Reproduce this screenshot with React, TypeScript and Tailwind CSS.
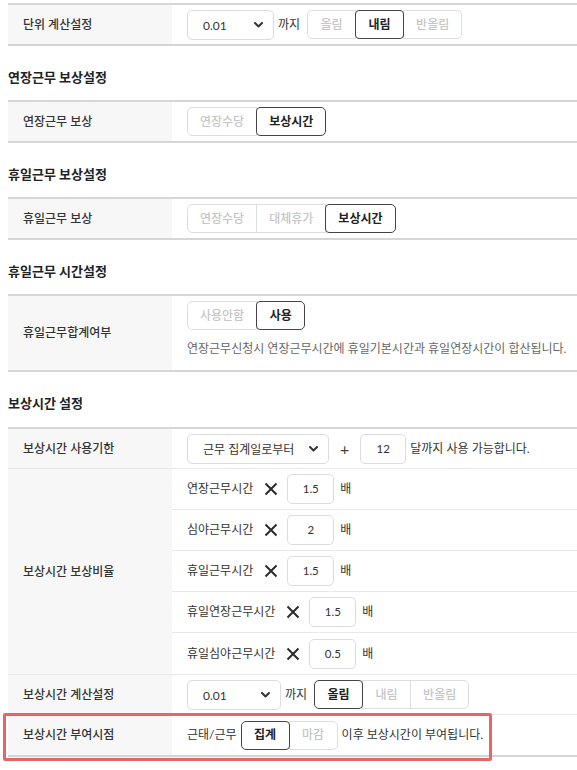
import React from 'react';
import clsx from 'clsx';

const FONT = "font-['Lato','Noto_Sans_CJK_KR',sans-serif]";

const Chevron = () => (
  <svg width="9" height="6" viewBox="0 0 9 6" fill="none">
    <path d="M1 1l3.5 3.5L8 1" stroke="#333" strokeWidth="2" strokeLinecap="round" strokeLinejoin="round" />
  </svg>
);

const Times = () => (
  <svg width="14" height="14" viewBox="0 0 14 14" fill="none">
    <path d="M1.5 1.5l11 11M12.5 1.5l-11 11" stroke="#2b2b2b" strokeWidth="2" />
  </svg>
);

interface SelectProps {
  value: string;
  width: string;
}

const SelectBox: React.FC<SelectProps> = ({ value, width }) => (
  <div
    className={clsx(
      'flex h-[30px] items-center justify-between rounded-[5px] border border-[#dcdcdc] bg-white pl-[15px] pr-[10px] text-[12px] text-[#333]',
      width
    )}
  >
    <span className="pt-[3px]">{value}</span>
    <Chevron />
  </div>
);

const NumBox: React.FC<{ value: string; width?: string }> = ({ value, width = 'w-[47px]' }) => (
  <div
    className={clsx(
      'flex h-[30px] items-center justify-center rounded-[5px] border border-[#dcdcdc] bg-white text-[11.5px] text-[#333]',
      width
    )}
  >
    {value}
  </div>
);

interface SegProps {
  items: string[];
  active: number;
}

const Seg: React.FC<SegProps> = ({ items, active }) => (
  <div className="flex h-[29px]">
    {items.map((t, i) => (
      <div
        key={t}
        className={clsx(
          'flex min-w-[49px] items-center justify-center border px-3 text-[12px]',
          i > 0 && '-ml-px',
          i === 0 && 'rounded-l-[5px]',
          i === items.length - 1 && 'rounded-r-[5px]',
          i === active
            ? 'relative z-10 rounded-[4px] border-[#444] font-bold text-[#222]'
            : 'border-[#dedede] font-medium text-[#c6c6c6]'
        )}
      >
        {t}
      </div>
    ))}
  </div>
);

const Label: React.FC<{ children: React.ReactNode }> = ({ children }) => (
  <div className="flex w-[164px] shrink-0 items-center bg-[#f7f7f7] pl-[15px] text-[12px] font-medium text-[#333]">
    {children}
  </div>
);

const Heading: React.FC<{ children: React.ReactNode; top?: string; bottom?: string }> = ({
  children,
  top = 'pt-[23px]',
  bottom = 'pb-[15px]',
}) => (
  <div className={clsx('text-[13px] font-bold leading-[16px] text-[#222]', top, bottom)}>{children}</div>
);

const RatioRow: React.FC<{ name: string; value: string; last?: boolean }> = ({ name, value, last }) => (
  <div className={clsx('flex h-[41px] items-center pl-[15px] text-[12px] text-[#333]', !last && 'border-b border-[#e8e8e8]')}>
    <span>{name}</span>
    <span className="ml-[11px] mr-[9px]">
      <Times />
    </span>
    <NumBox value={value} />
    <span className="ml-[6px]">배</span>
  </div>
);

export default function App() {
  return (
    <div className={clsx('min-h-screen bg-white pl-2 pt-[3px]', FONT)}>
      {/* 단위 계산설정 */}
      <div className="border-y-2 border-[#d6d6d6]">
        <div className="flex h-[39px]">
          <Label>단위 계산설정</Label>
          <div className="flex items-center pl-[15px] text-[12px] text-[#333]">
            <SelectBox value="0.01" width="w-[87px]" />
            <span className="ml-[4px] mr-[7px]">까지</span>
            <Seg items={['올림', '내림', '반올림']} active={1} />
          </div>
        </div>
      </div>

      <Heading>연장근무 보상설정</Heading>
      <div className="border-y-2 border-[#d6d6d6]">
        <div className="flex h-[39px]">
          <Label>연장근무 보상</Label>
          <div className="flex items-center pl-[15px]">
            <Seg items={['연장수당', '보상시간']} active={1} />
          </div>
        </div>
      </div>

      <Heading>휴일근무 보상설정</Heading>
      <div className="border-y-2 border-[#d6d6d6]">
        <div className="flex h-[39px]">
          <Label>휴일근무 보상</Label>
          <div className="flex items-center pl-[15px]">
            <Seg items={['연장수당', '대체휴가', '보상시간']} active={2} />
          </div>
        </div>
      </div>

      <Heading>휴일근무 시간설정</Heading>
      <div className="border-y-2 border-[#d6d6d6]">
        <div className="flex">
          <Label>휴일근무합계여부</Label>
          <div className="pb-[12px] pl-[15px] pt-[5px]">
            <div className="flex">
              <Seg items={['사용안함', '사용']} active={1} />
            </div>
            <p className="mt-[10px] text-[12px] leading-[18px] text-[#666]">
              연장근무신청시 연장근무시간에 휴일기본시간과 휴일연장시간이 합산됩니다.
            </p>
          </div>
        </div>
      </div>

      <Heading top="pt-[23px]" bottom="pb-[16px]">
        보상시간 설정
      </Heading>
      <div className="border-y-2 border-[#d6d6d6]">
        <div className="flex h-[40px] border-b border-[#e8e8e8]">
          <Label>보상시간 사용기한</Label>
          <div className="flex items-center pl-[15px] text-[12px] text-[#333]">
            <SelectBox value="근무 집계일로부터" width="w-[142px]" />
            <span className="mx-[11px] text-[16px] leading-none text-[#444]">+</span>
            <NumBox value="12" width="w-[46px]" />
            <span className="ml-[4px]">달까지 사용 가능합니다.</span>
          </div>
        </div>

        <div className="flex border-b border-[#e8e8e8]">
          <Label>보상시간 보상비율</Label>
          <div className="flex-1">
            <RatioRow name="연장근무시간" value="1.5" />
            <RatioRow name="심야근무시간" value="2" />
            <RatioRow name="휴일근무시간" value="1.5" />
            <RatioRow name="휴일연장근무시간" value="1.5" />
            <RatioRow name="휴일심야근무시간" value="0.5" last />
          </div>
        </div>

        <div className="flex h-[40px] border-b border-[#e8e8e8]">
          <Label>보상시간 계산설정</Label>
          <div className="flex items-center pl-[15px] text-[12px] text-[#333]">
            <SelectBox value="0.01" width="w-[94px]" />
            <span className="ml-[4px] mr-[7px]">까지</span>
            <Seg items={['올림', '내림', '반올림']} active={0} />
          </div>
        </div>

        <div className="relative flex h-[40px]">
          <Label>보상시간 부여시점</Label>
          <div className="flex items-center pl-[15px] text-[12px] text-[#333]">
            <span>근태/근무</span>
            <span className="ml-[4px] mr-[4px]">
              <Seg items={['집계', '마감']} active={0} />
            </span>
            <span>이후 보상시간이 부여됩니다.</span>
          </div>
          {/* 강조 표시 박스 */}
          <div className="pointer-events-none absolute -left-[5px] -top-[2px] h-[48px] w-[489px] rounded-[2px] border-[3px] border-[#e86565]" />
        </div>
      </div>
    </div>
  );
}
